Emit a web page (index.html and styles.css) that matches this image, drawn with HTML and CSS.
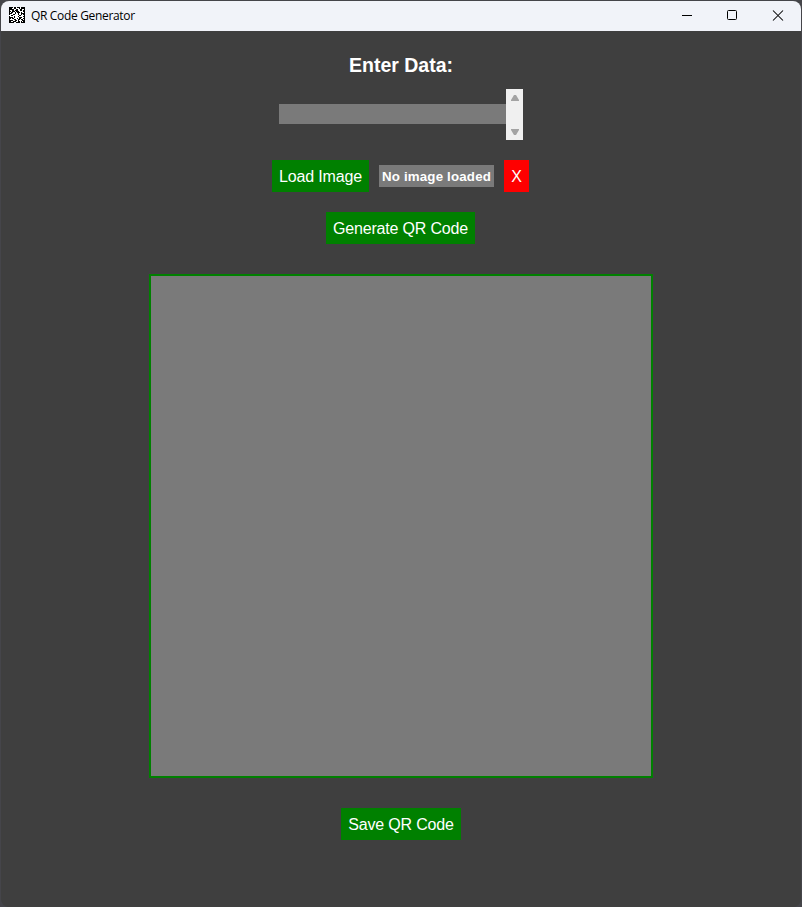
FILE: index.html
```html
<!DOCTYPE html>
<html lang="en">
<head>
<meta charset="utf-8">
<title>QR Code Generator</title>
<link rel="stylesheet" href="styles.css">
</head>
<body>
<div class="window">
  <header class="titlebar">
    <svg class="app-icon" width="16" height="16" viewBox="0 0 16 16" shape-rendering="crispEdges">
      <path fill="#000" d="M0 0h16v16H0z"/>
      <path stroke="#fff" d="M4 .5h1m2 0h1m3 0h1M3 1.5h2m2 0h3m1 0h1M5 2.5h2m2 0h2m2 0h2M1 3.5h2m2 0h1m3 0h2m2 0h1M2 4.5h1m3 0h1m3 0h4M1 5.5h1m2 0h2m1 0h1m3 0h1m1 0h2M3 6.5h3m1 0h2m1 0h2M1 7.5h3m2 0h3m1 0h2m1 0h1M0 8.5h2m2 0h6m2 0h3M1 9.5h4m1 0h3m1 0h4M4 10.5h1m1 0h4m3 0h2M2 11.5h1m2 0h3m1 0h1m2 0h2M1 12.5h4m2 0h2m2 0h1m2 0h1M4 13.5h2m2 0h1m1 0h3M2 14.5h2m3 0h2m2 0h1m1 0h1M5 15.5h2m4 0h1"/>
    </svg>
    <span class="app-title">QR Code Generator</span>
    <div class="controls">
      <span class="control"><svg width="12" height="12" viewBox="0 0 12 12"><path d="M1 6.5h10"/></svg></span>
      <span class="control"><svg width="12" height="12" viewBox="0 0 12 12"><rect x="1.5" y="1.5" width="9" height="9" rx="1"/></svg></span>
      <span class="control close"><svg width="12" height="12" viewBox="0 0 12 12"><path d="M1 1.5l10 10M11 1.5l-10 10"/></svg></span>
    </div>
  </header>
  <main class="content">
    <h1 class="heading">Enter Data:</h1>
    <div class="entry">
      <div class="entry-field"></div>
      <div class="scrollbar">
        <svg width="8" height="6" viewBox="0 0 8 6"><path d="M0 6V5l3-5h2l3 5v1z"/></svg>
        <svg width="8" height="6" viewBox="0 0 8 6"><path d="M0 0v1l3 5h2l3-5V0z"/></svg>
      </div>
    </div>
    <div class="image-row">
      <div class="button load">Load Image</div>
      <div class="status">No image loaded</div>
      <div class="button clear">X</div>
    </div>
    <div class="button generate">Generate QR Code</div>
    <div class="canvas"></div>
    <div class="button save">Save QR Code</div>
  </main>
</div>
</body>
</html>
```
FILE: styles.css
```css
* { box-sizing: border-box; }
body {
  margin: 0;
  height: 907px;
  padding: 1px;
  background: #45454a;
  font-family: "Liberation Sans", Arial, sans-serif;
  overflow: hidden;
}
.window {
  height: 906px;
  border-radius: 8px;
  overflow: hidden;
  background: #3f3f3f;
}
.titlebar {
  height: 30px;
  display: flex;
  align-items: center;
  padding-left: 8px;
  background: #f1f3f9;
}
.app-icon { margin-top: -2px; }
.app-title {
  margin-left: 6px;
  font: 12px/16px "Open Sans", sans-serif;
  letter-spacing: -0.33px;
  color: #000;
}
.controls {
  display: flex;
  margin-left: auto;
}
.control {
  width: 45px;
  height: 30px;
  display: flex;
  justify-content: center;
  padding-top: 8px;
}
.control.close { width: 47px; }
.control svg {
  fill: none;
  stroke: #000;
  stroke-width: 1;
}
.control.close svg { stroke-width: 1.05; }
.content {
  display: flex;
  flex-direction: column;
  align-items: center;
}
.heading {
  margin: 22px 0 0;
  height: 24px;
  font-size: 19.5px;
  line-height: 24px;
  font-weight: bold;
  color: #fff;
}
.entry {
  display: flex;
  align-items: flex-start;
  margin-top: 12px;
}
.entry-field {
  width: 227px;
  height: 20px;
  margin-top: 15px;
  background: #7a7a7a;
}
.scrollbar {
  width: 17px;
  height: 51px;
  display: flex;
  flex-direction: column;
  justify-content: space-between;
  align-items: center;
  padding: 6px 0 5px 1px;
  background: #f0f0f0;
}
.scrollbar svg { fill: #a3a3a3; }
.image-row {
  display: flex;
  align-items: center;
  gap: 10px;
  margin-top: 20px;
  margin-right: 1px;
}
.button {
  height: 32px;
  font-size: 16px;
  line-height: 33px;
  letter-spacing: -0.17px;
  text-align: center;
  white-space: nowrap;
  color: #fff;
  background: #008000;
}
.load { width: 97px; }
.clear { width: 25px; background: #f00; }
.status {
  width: 115px;
  height: 22px;
  font-size: 13.3px;
  line-height: 23px;
  font-weight: bold;
  letter-spacing: 0.18px;
  text-align: center;
  white-space: nowrap;
  color: #fff;
  background: #7a7a7a;
}
.generate { width: 149px; margin: 20px 1px 0 0; }
.canvas {
  width: 504px;
  height: 504px;
  margin-top: 30px;
  border: 2px solid #008000;
  background: #7a7a7a;
}
.save { width: 120px; margin-top: 30px; }
```
